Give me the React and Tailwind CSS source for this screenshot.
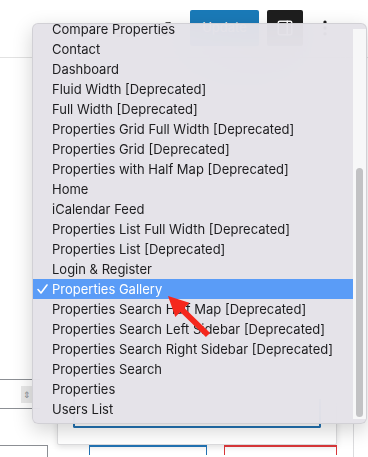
import React from "react";
import { ExternalLink, Monitor, PanelRight, MoreVertical } from "lucide-react";

const items = [
  "Compare Properties",
  "Contact",
  "Dashboard",
  "Fluid Width [Deprecated]",
  "Full Width [Deprecated]",
  "Properties Grid Full Width [Deprecated]",
  "Properties Grid [Deprecated]",
  "Properties with Half Map [Deprecated]",
  "Home",
  "iCalendar Feed",
  "Properties List Full Width [Deprecated]",
  "Properties List [Deprecated]",
  "Login & Register",
  "Properties Gallery",
  "Properties Search Half Map [Deprecated]",
  "Properties Search Left Sidebar [Deprecated]",
  "Properties Search Right Sidebar [Deprecated]",
  "Properties Search",
  "Properties",
  "Users List",
];

const selected = "Properties Gallery";

const Check = () => (
  <svg width="11" height="10" viewBox="0 0 11 10" fill="none">
    <polyline points="1,5.5 4,9 10,1" stroke="currentColor" strokeWidth="1.6" strokeLinecap="round" strokeLinejoin="round" />
  </svg>
);

const TemplateMenu = () => (
  <div className="absolute left-[32px] top-[23px] w-[335px] h-[401px] rounded-[6px] border border-[#c9c7cc]/70 bg-[#e4e2e8]/95 backdrop-blur-2xl shadow-[0_6px_20px_rgba(0,0,0,0.18)] flex overflow-hidden">
    <div className="flex-1 overflow-hidden">
      <ul className="-mt-[5px]">
        {items.map((label) => {
          const active = label === selected;
          return (
            <li
              key={label}
              className={`flex h-[20px] items-center text-[13px] leading-[20px] ${active ? "bg-[#5a9cf7] text-white" : "text-[#1d1d1f]"}`}
            >
              <span className="w-[19px] pl-[4px] flex items-center">{active ? <Check /> : null}</span>
              <span className="whitespace-nowrap">{label}</span>
            </li>
          );
        })}
      </ul>
    </div>
    <div className="w-[13px] mt-[5px] mb-[4px] bg-[#f7f7f8] flex flex-col justify-end items-center pb-[2px]">
      <div className="w-[7px] h-[249px] rounded-full bg-[#c2c2c4]" />
    </div>
  </div>
);

export default function App() {
  return (
    <div
      className="relative w-[368px] h-[457px] overflow-hidden bg-white"
      style={{ fontFamily: "Inter, 'Liberation Sans', sans-serif" }}
    >
      {/* editor toolbar */}
      <header className="h-[58px] border-b border-[#e2e2e2] flex items-start pt-[10px]">
        <div className="ml-[112px] mt-[12px] text-[#1e1e1e]"><Monitor className="h-[16px] w-[16px]" /></div>
        <div className="ml-[28px] mt-[11px] text-[#1e1e1e]"><ExternalLink className="h-[16px] w-[16px]" /></div>
        <button className="ml-[18px] h-[36px] w-[69px] rounded-[2px] bg-[#1a7ab8] text-white text-[13px]">Update</button>
        <div className="ml-[8px] h-[36px] w-[36px] rounded-[2px] bg-[#1e1e1e] flex items-center justify-center text-white">
          <PanelRight className="h-[18px] w-[18px]" />
        </div>
        <div className="ml-[12px] mt-[8px] text-[#1e1e1e]"><MoreVertical className="h-[20px] w-[20px]" /></div>
      </header>

      {/* sidebar fragments behind the menu */}
      <div className="flex">
        <div className="w-[57px] shrink-0">
          <div className="mt-[321px] h-[30px] w-[40px] border-y border-[#8c8f94] flex justify-end pr-[8px] items-center">
            <div className="h-[17px] w-[11px] bg-[#e8e8e8] text-[9px] text-[#8c8f94] flex items-center justify-center leading-none">⇕</div>
          </div>
          <div className="mt-[36px] h-[20px] w-[48px] border border-[#8c8f94] border-l-0" />
        </div>
        <div className="w-[280px] shrink-0 flex flex-col">
          <div className="mt-[340px] h-[47px] border border-[#dcdcde] rounded-b-[2px] bg-white shadow-[0_2px_6px_rgba(0,0,0,0.12)] px-[15px]">
            <div className="h-[29px] border-2 border-t-0 border-[#2271b1] rounded-b-[2px]" />
          </div>
          <div className="flex gap-[17px] pl-[32px]">
            <div className="h-[10px] w-[118px] border-t-2 border-x border-[#2271b1]" />
            <div className="h-[10px] w-[113px] border-t-2 border-x border-[#d63638]" />
          </div>
        </div>
        <div className="ml-[16px] mt-[366px] h-[40px] border-l border-[#dcdcde]" />
      </div>

      <TemplateMenu />

      {/* red pointer arrow */}
      <svg
        className="absolute left-[160px] top-[288px]"
        width="55"
        height="54"
        viewBox="160 288 55 54"
      >
        <polygon
          points="168,296 189.3,302.8 184.4,307.9 210.1,332.9 205.9,337.1 180.2,312.1 175.3,317.1"
          fill="#f5271d"
        />
      </svg>
    </div>
  );
}
